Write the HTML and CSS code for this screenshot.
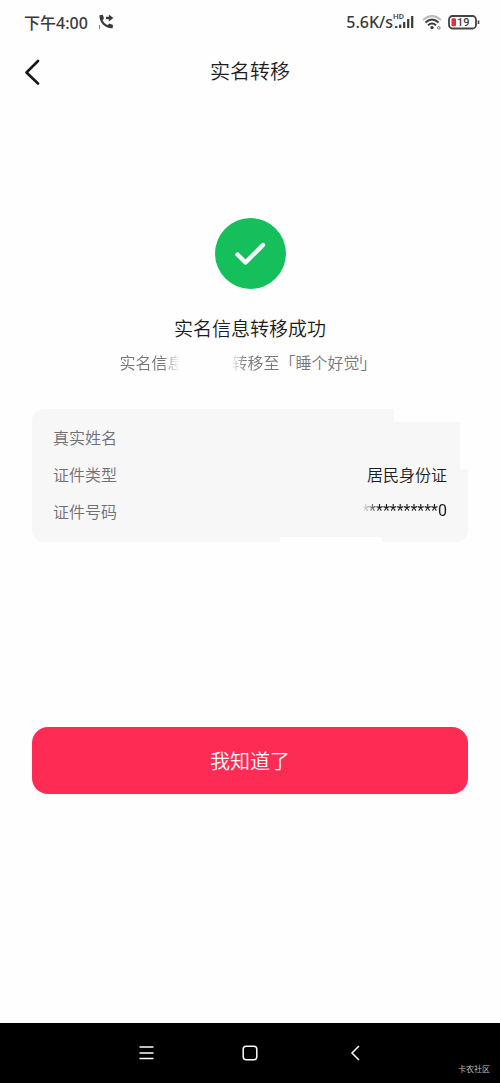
FILE: index.html
```html
<!DOCTYPE html>
<html lang="zh-CN">
<head>
<meta charset="utf-8">
<meta name="viewport" content="width=device-width, initial-scale=1">
<title>实名转移</title>
<link rel="stylesheet" href="styles.css">
</head>
<body>
<div class="status">
  <div class="status-side">
    <span class="clock">下午4:00</span>
    <svg class="call-icon" width="16" height="16" viewBox="0 0 16 16" aria-hidden="true">
      <path d="M1.500 1.200 4.800.8 6 4.600 4.600 6.200C5.400 8.200 7.200 10 9.800 11L11.400 9.600 15 11 14.600 14.300C7.500 14.800 1 8.500 1.500 1.200Z" fill="#3a3a3c"/>
      <path d="M8 4h3.500" fill="none" stroke="#3a3a3c" stroke-width="2.400"/>
      <path d="M10.800.6 15.400 4l-4.600 3.400z" fill="#3a3a3c"/>
      <path d="M1.500 11v4" stroke="#888" stroke-width="1"/>
    </svg>
  </div>
  <div class="status-side status-right">
    <span class="speed">5.6K/s</span>
    <svg width="21" height="18" viewBox="0 0 21 18" aria-hidden="true">
      <path d="M3.200 13v2M7.200 11.500V15M11.200 9V15M15.200 6v9M19.200 3v12" fill="none" stroke="#3a3a3c" stroke-width="2.200"/>
      <text class="hd" x="0" y="6">HD</text>
    </svg>
    <svg class="wifi" width="20" height="18" viewBox="0 0 20 18" aria-hidden="true">
      <path d="M1 7Q10-1 19 7" fill="none" stroke="#b9b9bb" stroke-width="1.800"/>
      <path d="M3.500 9.500Q10 3.500 16.500 9.500M6 12.300Q10 8.800 14 12.300" fill="none" stroke="#3a3a3c" stroke-width="2"/>
      <circle cx="10" cy="14.600" r="1.700" fill="#3a3a3c"/>
      <circle cx="16.800" cy="14.800" r="1.300" fill="none" stroke="#777" stroke-width="1"/>
    </svg>
    <svg class="battery" width="32" height="16" viewBox="0 0 32 16" aria-hidden="true">
      <rect x="1" y="2" width="27" height="12.500" rx="3.500" fill="#fff" stroke="#444446" stroke-width="1.800"/>
      <rect x="3.500" y="4.300" width="4.500" height="8" rx="1" fill="#d9363a"/>
      <path d="M30.500 6.500v3.500" stroke="#444446" stroke-width="1.600"/>
      <text class="level" x="9" y="12">19</text>
    </svg>
  </div>
</div>

<header class="topbar">
  <button class="back" type="button" aria-label="返回">
    <svg width="16" height="26" viewBox="0 0 16 26" aria-hidden="true"><path d="M14 2 2.500 13.500l11.500 11" fill="none" stroke="#17171c" stroke-width="2.600" stroke-linecap="round" stroke-linejoin="round"/></svg>
  </button>
  <h1 class="title">实名转移</h1>
</header>

<main class="content">
  <svg class="success" width="72" height="72" viewBox="0 0 72 72" aria-hidden="true">
    <circle cx="36.500" cy="35.500" r="35.500" fill="#15bf5b"/>
    <path d="M23.500 36.500 31.500 44.500 49 27" fill="none" stroke="#fff" stroke-width="4.400" stroke-linecap="round" stroke-linejoin="round"/>
  </svg>
  <h2 class="headline">实名信息转移成功</h2>
  <p class="detail"><span class="fade-end">实名信息</span><span class="hidden-name"></span><span class="fade-start">转移至</span>「睡个好觉<span class="small-i">i</span>」</p>

  <dl class="card">
    <div class="row"><dt>真实姓名</dt><dd></dd></div>
    <div class="row"><dt>证件类型</dt><dd>居民身份证</dd></div>
    <div class="row"><dt>证件号码</dt><dd class="number">***********0</dd></div>
    <div class="patch patch-top"></div>
    <div class="patch patch-side"></div>
    <div class="patch patch-bottom"></div>
  </dl>

  <button class="confirm" type="button">我知道了</button>
</main>

<nav class="navbar">
  <div class="nav-keys">
    <button class="key" type="button" aria-label="菜单"><svg width="16" height="16" viewBox="0 0 16 16"><path d="M1.500 2h14M1.500 8h14M1.500 13.500h14" stroke="#fff" stroke-width="1.500"/></svg></button>
    <button class="key" type="button" aria-label="主页"><svg width="16" height="16" viewBox="0 0 16 16"><rect x="1.200" y="1.200" width="13.600" height="13.600" rx="3" fill="none" stroke="#fff" stroke-width="1.500"/></svg></button>
    <button class="key" type="button" aria-label="后退"><svg width="16" height="16" viewBox="0 0 16 16"><path d="M13 1 6 8l7 7" fill="none" stroke="#fff" stroke-width="1.500"/></svg></button>
  </div>
  <span class="watermark">卡农社区</span>
</nav>
</body>
</html>
```
FILE: styles.css
```css
* {
  box-sizing: border-box;
}

body {
  margin: 0;
  min-height: 100vh;
  display: flex;
  flex-direction: column;
  background: #fefefe;
  color: #1c1c20;
  font-family: Roboto, "Noto Sans CJK SC", sans-serif;
}

button {
  border: 0;
  padding: 0;
  background: none;
  font: inherit;
  cursor: pointer;
}

.status {
  display: flex;
  justify-content: space-between;
  align-items: center;
  height: 44px;
  padding: 0 20px 0 24px;
  color: #3a3a3c;
  font-family: "Noto Sans", "Noto Sans CJK SC", sans-serif;
  font-size: 16px;
  font-weight: 500;
}

.status-side {
  display: flex;
  align-items: center;
}

.call-icon {
  margin-left: 10px;
}

.wifi {
  margin-left: 8px;
}

.battery {
  margin-left: 6px;
}

.hd {
  font: 500 8px Roboto, sans-serif;
  fill: #3a3a3c;
}

.level {
  font: 500 11px Roboto, sans-serif;
  fill: #3a3a3c;
}

.topbar {
  display: grid;
  grid-template-columns: 1fr auto 1fr;
  align-items: center;
  height: 56px;
  padding: 0 24px;
}

.back {
  display: flex;
  justify-self: start;
}

.title {
  margin: 0;
  font-size: 20px;
  line-height: 32px;
  font-weight: 350;
}

.content {
  flex: 1;
  display: flex;
  flex-direction: column;
  align-items: center;
  padding: 118px 32px 0;
}

.headline {
  margin: 25px 0 0;
  font-size: 19px;
  line-height: 30px;
  font-weight: 350;
}

.detail {
  display: flex;
  margin: 7px 0 0;
  padding-right: 4px;
  color: #77777a;
  font-size: 16px;
  line-height: 24px;
  font-weight: 350;
}

.hidden-name {
  width: 48px;
}

.fade-end {
  mask-image: linear-gradient(to right, #000 70%, transparent 95%);
}

.fade-start {
  mask-image: linear-gradient(to right, transparent, #000 30%);
}

.small-i {
  width: 1px;
  font-size: 12px;
  line-height: 16px;
  font-weight: 400;
}

.card {
  position: relative;
  align-self: stretch;
  margin: 33px 0 0;
  padding: 9px 21px 13px;
  border-radius: 12px;
  background: #f7f7f7;
  font-size: 16px;
  font-weight: 350;
}

.row {
  display: flex;
  justify-content: space-between;
  align-items: center;
  height: 37px;
}

.row dt {
  color: #707073;
}

.row dd {
  margin: 0;
}

.row .number {
  font-weight: 400;
  line-height: 24px;
  mask-image: linear-gradient(to right, transparent, #000 20%);
}

.patch {
  position: absolute;
  background: #fefefe;
}

.patch-top {
  top: 0;
  right: 0;
  width: 74px;
  height: 13px;
}

.patch-side {
  top: 0;
  right: 0;
  width: 8px;
  height: 60px;
}

.patch-bottom {
  bottom: 0;
  right: 86px;
  width: 102px;
  height: 5px;
}

.confirm {
  align-self: stretch;
  height: 67px;
  margin-top: 185px;
  border-radius: 16px;
  background: #fe2b54;
  color: #fff;
  font-size: 20px;
  font-weight: 350;
}

.navbar {
  position: relative;
  height: 60px;
  background: #000;
}

.nav-keys {
  display: flex;
  justify-content: center;
  height: 100%;
}

.key {
  display: flex;
  align-items: center;
  justify-content: center;
  width: 104px;
}

.watermark {
  position: absolute;
  right: 10px;
  bottom: 5px;
  color: #bbb;
  font-size: 8px;
  line-height: 16px;
}
```
